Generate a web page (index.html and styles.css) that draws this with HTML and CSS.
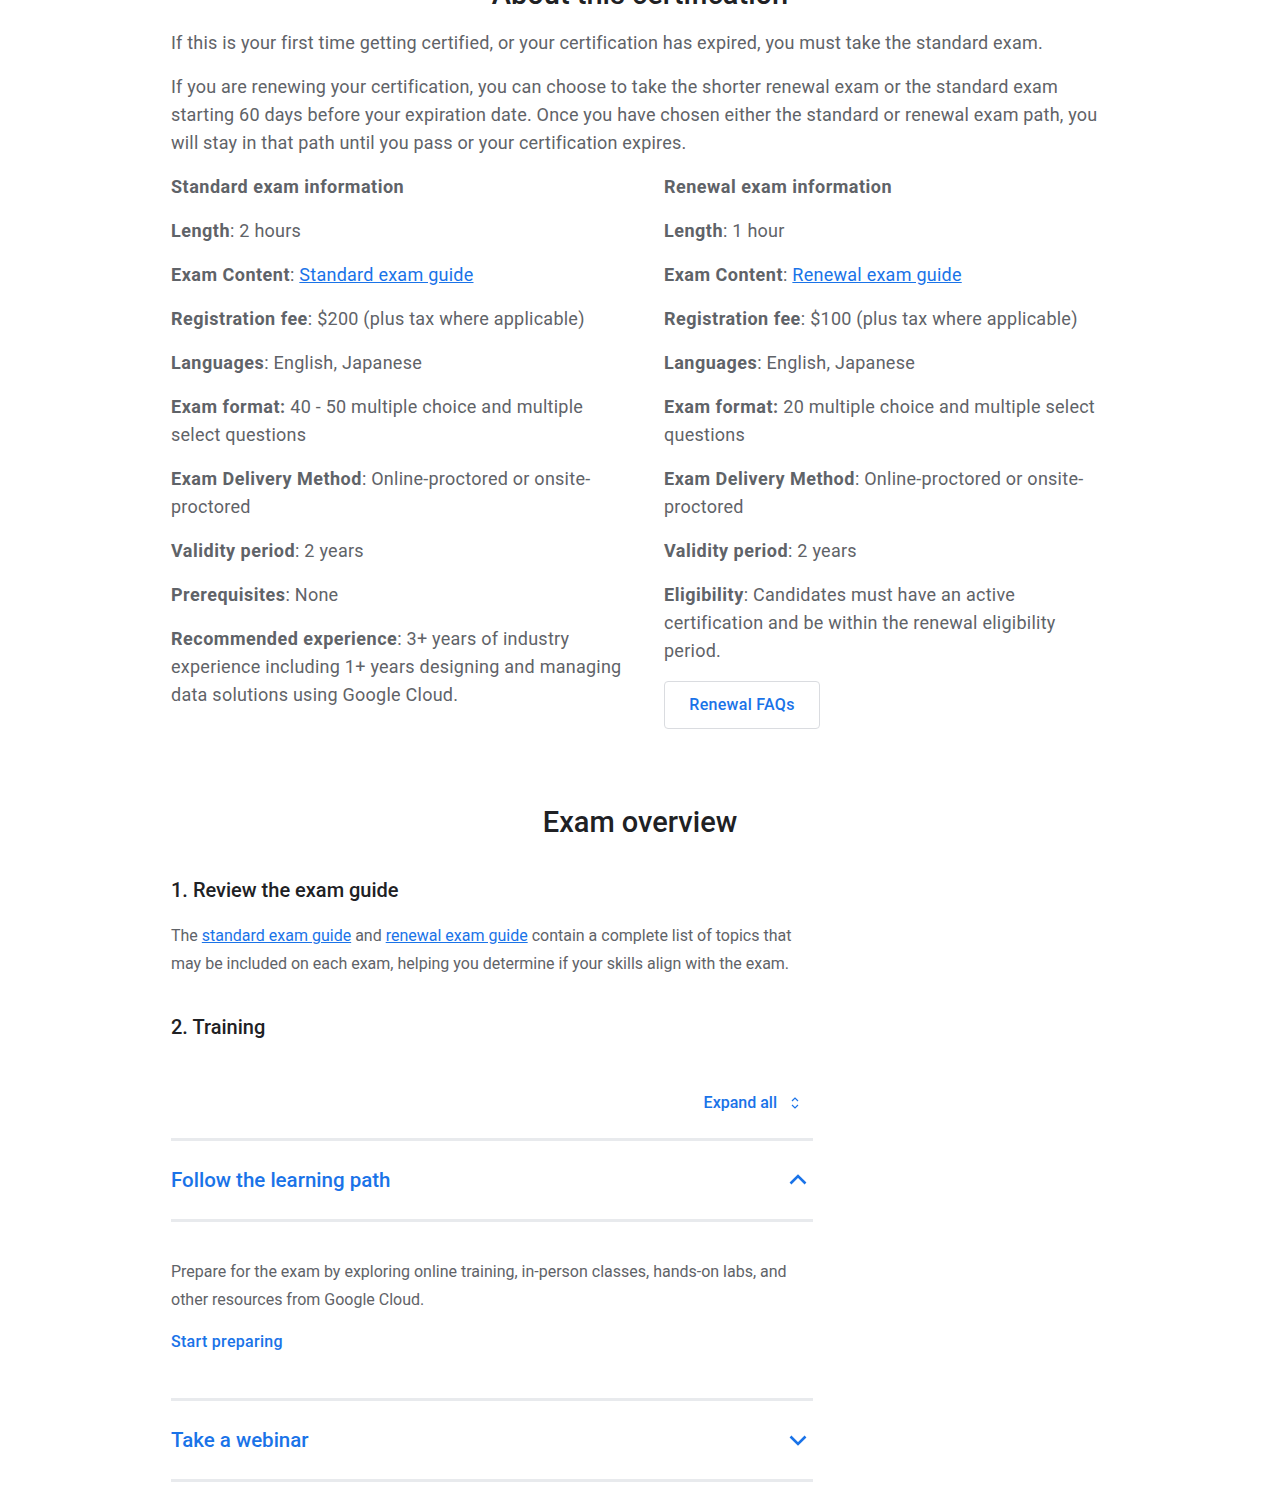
FILE: index.html
```html
<!DOCTYPE html>
<html lang="en">
<head>
  <meta charset="UTF-8">
  <title>Professional Data Engineer certification</title>
  <link rel="stylesheet" href="styles.css">
</head>
<body>
  <main class="page">
    <section class="about">
      <h2 class="section-title about-title">About this certification</h2>
      <p class="lead">If this is your first time getting certified, or your certification has expired, you must take the standard exam.</p>
      <p class="lead">If you are renewing your certification, you can choose to take the shorter renewal exam or the standard exam starting 60 days before your expiration date. Once you have chosen either the standard or renewal exam path, you will stay in that path until you pass or your certification expires.</p>

      <div class="exam-cols">
        <div class="exam-col">
          <p class="col-title">Standard exam information</p>
          <p><b>Length</b>: 2 hours</p>
          <p><b>Exam Content</b>: <a href="#">Standard exam guide</a></p>
          <p><b>Registration fee</b>: $200 (plus tax where applicable)</p>
          <p><b>Languages</b>: English, Japanese</p>
          <p><b>Exam format:</b> 40 - 50 multiple choice and multiple select questions</p>
          <p><b>Exam Delivery Method</b>: Online-proctored or onsite-proctored</p>
          <p><b>Validity period</b>: 2 years</p>
          <p><b>Prerequisites</b>: None</p>
          <p><b>Recommended experience</b>: 3+ years of industry experience including 1+ years designing and managing data solutions using Google Cloud.</p>
        </div>
        <div class="exam-col">
          <p class="col-title">Renewal exam information</p>
          <p><b>Length</b>: 1 hour</p>
          <p><b>Exam Content</b>: <a href="#">Renewal exam guide</a></p>
          <p><b>Registration fee</b>: $100 (plus tax where applicable)</p>
          <p><b>Languages</b>: English, Japanese</p>
          <p><b>Exam format:</b> 20 multiple choice and multiple select questions</p>
          <p><b>Exam Delivery Method</b>: Online-proctored or onsite-proctored</p>
          <p><b>Validity period</b>: 2 years</p>
          <p><b>Eligibility</b>: Candidates must have an active certification and be within the renewal eligibility period.</p>
          <a class="outline-button" href="#">Renewal FAQs</a>
        </div>
      </div>
    </section>

    <section class="overview">
      <h2 class="section-title">Exam overview</h2>

      <div class="steps">
        <h3 class="step-title">1. Review the exam guide</h3>
        <p class="step-text">The <a href="#">standard exam guide</a> and <a href="#">renewal exam guide</a> contain a complete list of topics that may be included on each exam, helping you determine if your skills align with the exam.</p>

        <h3 class="step-title">2. Training</h3>

        <div class="accordion">
          <div class="accordion-tools">
            <button class="expand-all" type="button">
              Expand all
              <svg width="16" height="16" viewBox="0 0 24 24" aria-hidden="true"><path d="M7.5 9 12 4.5 16.5 9M7.5 15 12 19.5 16.5 15" fill="none" stroke="currentColor" stroke-width="1.8"/></svg>
            </button>
          </div>

          <div class="accordion-item open">
            <div class="accordion-head">
              <span>Follow the learning path</span>
              <svg width="24" height="24" viewBox="0 0 24 24" aria-hidden="true"><path d="M4.5 15.5 12 8l7.5 7.5" fill="none" stroke="currentColor" stroke-width="2.6"/></svg>
            </div>
            <div class="accordion-body">
              <p>Prepare for the exam by exploring online training, in-person classes, hands-on labs, and other resources from Google Cloud.</p>
              <a class="text-link" href="#">Start preparing</a>
            </div>
          </div>

          <div class="accordion-item">
            <div class="accordion-head">
              <span>Take a webinar</span>
              <svg width="24" height="24" viewBox="0 0 24 24" aria-hidden="true"><path d="M4.5 8.5 12 16l7.5-7.5" fill="none" stroke="currentColor" stroke-width="2.6"/></svg>
            </div>
          </div>
        </div>
      </div>
    </section>
  </main>
</body>
</html>
```

FILE: styles.css
```css
body {
  margin: 0;
  font-family: Roboto, "Liberation Sans", Arial, sans-serif;
  color: #5f6368;
  background: #fff;
  overflow: hidden;
}

a {
  color: #1a73e8;
}

.page {
  width: 938px;
  margin-left: 171px;
}

.section-title {
  margin: 0;
  text-align: center;
  color: #202124;
  font-size: 29px;
  line-height: 40px;
  font-weight: 500;
}

.about-title {
  margin-top: -26px;
  margin-bottom: 15px;
}

.lead {
  margin: 0 0 16px;
  font-size: 18px;
  line-height: 28px;
  letter-spacing: 0.2px;
}

.exam-cols {
  display: grid;
  grid-template-columns: 455px 445px;
  column-gap: 38px;
}

.exam-col p {
  margin: 0 0 16px;
  font-size: 18px;
  line-height: 28px;
  letter-spacing: 0.25px;
}

.exam-col b,
.exam-col .col-title {
  font-weight: 700;
  letter-spacing: 0.5px;
}

.outline-button {
  display: inline-block;
  box-sizing: border-box;
  width: 156px;
  height: 48px;
  line-height: 46px;
  text-align: center;
  border: 1px solid #dadce0;
  border-radius: 4px;
  font-size: 16px;
  font-weight: 500;
  letter-spacing: 0.3px;
  text-decoration: none;
}

.overview {
  margin-top: 73px;
}

.steps {
  width: 642px;
  margin-top: 32px;
}

.step-title {
  margin: 0 0 16px;
  color: #202124;
  font-size: 20px;
  line-height: 32px;
  font-weight: 500;
}

.step-text {
  margin: 0 0 33px;
  font-size: 16px;
  line-height: 28px;
}

.accordion {
  margin-top: 48px;
}

.accordion-tools {
  display: flex;
  justify-content: flex-end;
  padding-bottom: 23px;
}

.expand-all {
  display: flex;
  align-items: center;
  gap: 10px;
  padding: 0 10px 0 0;
  border: none;
  background: none;
  color: #1a73e8;
  font-family: inherit;
  font-size: 16px;
  font-weight: 500;
  line-height: 24px;
  cursor: pointer;
}

.accordion-item {
  border-top: 3px solid #e8eaed;
}

.accordion-item:last-child {
  border-bottom: 3px solid #e8eaed;
}

.accordion-head {
  display: flex;
  justify-content: space-between;
  align-items: center;
  height: 77px;
  padding-bottom: 1px;
  padding-right: 3px;
  color: #1a73e8;
  font-size: 20.5px;
  font-weight: 500;
}

.accordion-item.open .accordion-head {
  border-bottom: 3px solid #e8eaed;
}

.accordion-body {
  padding: 36px 0 42px;
}

.accordion-body p {
  margin: 0 0 14px;
  font-size: 16px;
  line-height: 28px;
}

.text-link {
  font-size: 16px;
  line-height: 28px;
  font-weight: 500;
  letter-spacing: 0.3px;
  text-decoration: none;
}
```
